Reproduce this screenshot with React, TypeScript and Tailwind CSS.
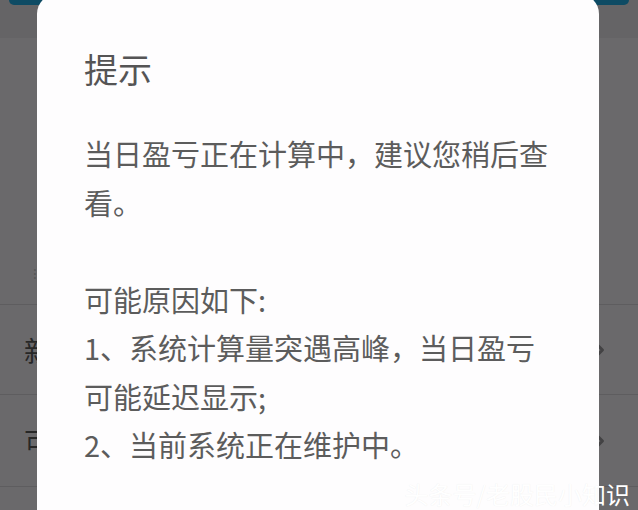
import { ChevronRight } from "lucide-react";

const font = "font-['Noto_Sans_CJK_SC','Noto_Sans',sans-serif]";

function BgRow({ char, last }: { char: string; last?: boolean }) {
  return (
    <div
      className={`flex h-[90px] items-center justify-between border-b border-[#5e5d5f] pl-[24px] pr-[28px] ${
        last ? "h-[92px]" : ""
      }`}
    >
      <span className="text-[28px] leading-none text-[#272727]">{char}</span>
      <ChevronRight className="size-[20px] text-[#434244]" strokeWidth={3.5} />
    </div>
  );
}

export default function App() {
  return (
    <div
      className={`relative h-[510px] w-[638px] overflow-hidden bg-[#6a696b] ${font}`}
    >
      {/* dimmed page behind the dialog */}
      <div className="flex h-full flex-col">
        <div className="h-[38px] bg-[#656466]">
          <div className="mx-[9px] h-[5px] rounded-b-[7px] bg-[#0e4b64]" />
        </div>
        <div className="h-[220px]" />
        <div className="flex h-[47px] items-start border-b border-[#5e5d5f] pl-[33px] pt-[8px]">
          <span className="text-[14px] leading-none text-[#555]">⁝</span>
        </div>
        <BgRow char="新" />
        <BgRow char="可" last />
        <div className="flex-1" />
      </div>

      {/* dialog */}
      <div className="absolute left-[37px] top-[-6px] h-[540px] w-[562px] rounded-[20px] bg-[#fefdfe] pl-[47px] pr-[45px] pt-[55px]">
        <h2 className="text-[34px] leading-[40px] font-normal text-[#555455]">
          提示
        </h2>
        <div className="mt-[40px] text-[29px] leading-[48.5px] text-[#5c5c5c]">
          <p>当日盈亏正在计算中，建议您稍后查看。</p>
          <div className="mt-[48.5px]">
            <p>可能原因如下:</p>
            <p>1、系统计算量突遇高峰，当日盈亏可能延迟显示;</p>
            <p>2、当前系统正在维护中。</p>
          </div>
        </div>
      </div>

      {/* watermark */}
      <div className="absolute bottom-[4px] right-[8px] text-[24px] leading-none text-white [text-shadow:0_0_1px_rgba(0,0,0,0.08)]">
        头条号/老股民小知识
      </div>
    </div>
  );
}
